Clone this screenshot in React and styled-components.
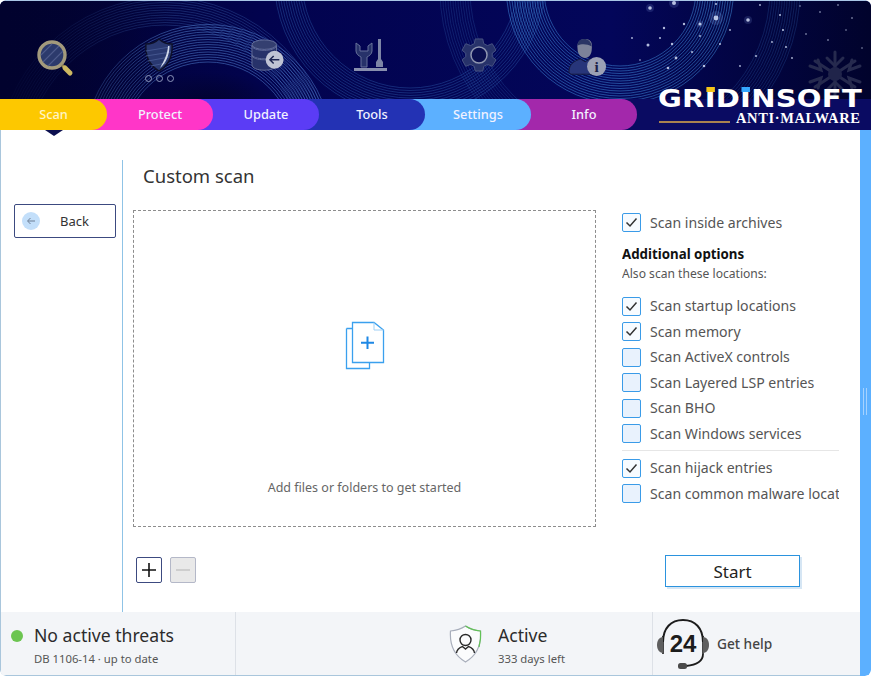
import React from 'react';
import styled, { createGlobalStyle } from 'styled-components';

const GlobalStyle = createGlobalStyle`
  html, body { margin: 0; padding: 0; background: #fff; }
  body { font-family: "Noto Sans", "Open Sans", sans-serif; }
  * { box-sizing: border-box; }
`;

const Window = styled.div`
  position: relative;
  width: 871px;
  height: 676px;
  display: flex;
  flex-direction: column;
  overflow: hidden;
  border-radius: 6px;
  background: #fff;
`;

const Banner = styled.div`
  position: relative;
  height: 99px;
  display: flex;
  overflow: hidden;
  background: #02034a;
  border-radius: 6px 6px 0 0;
  border-top: 1px solid #a9c6e6;
`;

const BannerArt = styled.svg`
  position: absolute;
  left: 0;
  top: -1px;
`;

const NavCell = styled.div`
  position: relative;
  width: 106px;
  display: flex;
  flex-direction: column;
  align-items: center;
  padding-top: 37px;
  padding-left: ${(p) => (p.$shift || 0) * 2}px;
`;

const Dots = styled.div`
  display: flex;
  gap: 4px;
  margin-top: 3px;
`;

const Dot = styled.span`
  width: 7px;
  height: 7px;
  border-radius: 50%;
  border: 1px solid #8d96ba;
`;

const TabStrip = styled.div`
  position: relative;
  height: 31px;
  display: flex;
  background: #0a0b62;
`;

const Tab = styled.div`
  position: relative;
  z-index: ${(p) => p.$layer};
  width: ${(p) => (p.$first ? 107 : 126)}px;
  margin-left: ${(p) => (p.$first ? 0 : -20)}px;
  padding-left: ${(p) => (p.$first ? 0 : 20)}px;
  background: ${(p) => p.$color};
  border-radius: 0 16px 16px 0;
  color: ${(p) => (p.$first ? '#fff4c4' : '#f2f2ff')};
  font-size: 12.8px;
  font-weight: 500;
  line-height: 30px;
  text-align: center;
`;

const Pointer = styled.div`
  position: absolute;
  left: 45px;
  top: 130px;
  z-index: 8;
  width: 0;
  height: 0;
  border-left: 9px solid transparent;
  border-right: 9px solid transparent;
  border-top: 6px solid #0c1050;
`;

const Logo = styled.div`
  position: absolute;
  left: 658px;
  top: 88px;
  z-index: 9;
  width: 206px;
  color: #fff;
`;

const LogoName = styled.div`
  height: 22px;
  font-family: "DejaVu Sans", sans-serif;
  font-weight: 700;
  font-size: 24px;
  line-height: 22px;
  letter-spacing: 0.2px;
  white-space: nowrap;
  transform: scaleX(1.21);
  transform-origin: left center;
`;

const LogoTip = styled.span`
  position: relative;
  &::before {
    content: '';
    position: absolute;
    left: 1px;
    right: 1px;
    top: 2px;
    height: 5px;
    background: ${(p) => p.$color};
  }
`;

const LogoLine = styled.div`
  display: flex;
  align-items: flex-end;
  gap: 6px;
`;

const LogoRule = styled.div`
  width: 71px;
  height: 2px;
  margin-bottom: 3px;
  margin-left: 1px;
  background: #a9824f;
`;

const LogoSub = styled.div`
  font-family: "Liberation Serif", serif;
  font-weight: 700;
  font-size: 14.5px;
  line-height: 16px;
  letter-spacing: 0.62px;
  white-space: nowrap;
`;

const Middle = styled.div`
  flex: 1;
  display: flex;
  min-height: 0;
`;

const LeftColumn = styled.div`
  width: 860px;
  display: flex;
  flex-direction: column;
  border-left: 1px solid #a9c6dc;
  border-bottom: 1px solid #a9c6dc;
  border-radius: 0 0 0 6px;
`;

const ScrollRail = styled.div`
  position: relative;
  width: 11px;
  background: #5cb0ff;
  border-radius: 0 0 6px 0;
`;

const ScrollGrip = styled.div`
  position: absolute;
  left: 3px;
  top: 258px;
  width: 4px;
  height: 27px;
  border-left: 1px solid #a5d2ff;
  border-right: 1px solid #a5d2ff;
`;

const Workspace = styled.div`
  flex: 1;
  display: flex;
  min-height: 0;
`;

const Sidebar = styled.div`
  width: 122px;
  margin-top: 30px;
  padding: 44px 0 0 13px;
  border-right: 1px solid #8fc3e6;
`;

const BackButton = styled.div`
  width: 102px;
  height: 34px;
  display: flex;
  align-items: center;
  padding-left: 7px;
  background: #fff;
  border: 1px solid #3c4a80;
  border-radius: 2px;
  color: #333;
  font-size: 13px;
`;

const BackCircle = styled.span`
  width: 18px;
  height: 18px;
  display: flex;
  align-items: center;
  justify-content: center;
  border-radius: 50%;
  background: #c3dffa;
  margin-right: 20px;
`;

const Content = styled.div`
  flex: 1;
  padding: 30px 0 0 10px;
`;

const Title = styled.h1`
  margin: 0 0 16px;
  padding-left: 10px;
  height: 34px;
  color: #333;
  font-size: 18.5px;
  font-weight: 400;
  line-height: 32px;
`;

const ScanRow = styled.div`
  display: flex;
  gap: 26px;
`;

const DropZone = styled.div`
  width: 463px;
  height: 317px;
  display: flex;
  flex-direction: column;
  align-items: center;
  padding: 110px 0 29px;
  border: 1px dashed #8d8d8d;
  color: #666;
  font-size: 12.5px;
`;

const DropHint = styled.div`
  margin-top: auto;
  line-height: 18px;
`;

const Options = styled.div`
  width: 217px;
  overflow: hidden;
`;

const OptionRow = styled.div`
  height: 25.5px;
  display: flex;
  align-items: center;
  gap: 9px;
  color: #555;
  font-size: 14.1px;
  white-space: nowrap;
`;

const OptionLabel = styled.span`
  margin-top: -1px;
`;

const Box = styled.span`
  flex: none;
  width: 19px;
  height: 19px;
  display: flex;
  align-items: center;
  justify-content: center;
  border: 1px solid #3a9be8;
  border-radius: 2px;
  background: ${(p) => (p.$checked ? '#f7fbff' : '#e9f2fd')};
`;

const OptionsHeading = styled.div`
  margin-top: 8px;
  color: #111;
  font-size: 13.3px;
  font-weight: 700;
  line-height: 20px;
`;

const OptionsNote = styled.div`
  margin-bottom: 11px;
  color: #555;
  font-size: 12.1px;
  line-height: 19px;
`;

const Divider = styled.div`
  height: 1px;
  margin: 3px 0 5px;
  background: #e6e6e6;
`;

const ActionRow = styled.div`
  display: flex;
  align-items: center;
  gap: 8px;
  margin-top: 26px;
  padding-left: 3px;
`;

const SquareButton = styled.div`
  width: 26px;
  height: 26px;
  display: flex;
  align-items: center;
  justify-content: center;
  border: 1px solid ${(p) => (p.$disabled ? '#b4b8c8' : '#3c4a80')};
  border-radius: 2px;
  background: ${(p) => (p.$disabled ? '#e9e9e9' : '#fff')};
`;

const StartButton = styled.div`
  width: 135px;
  height: 32px;
  margin-left: 461px;
  margin-top: 2px;
  border: 1px solid #2b93de;
  box-shadow: 2px 2px 0 #d6e6f4;
  color: #222;
  font-size: 17px;
  line-height: 31px;
  text-align: center;
`;

const Footer = styled.div`
  height: 63px;
  display: flex;
  background: #f3f5f8;
`;

const FooterCell = styled.div`
  width: ${(p) => p.$width}px;
  display: flex;
  align-items: center;
  padding-left: ${(p) => p.$pad}px;
  border-right: ${(p) => (p.$last ? 'none' : '1px solid #dde1e7')};
`;

const StatusDot = styled.span`
  flex: none;
  width: 12px;
  height: 12px;
  margin-right: 11px;
  margin-top: -16px;
  border-radius: 50%;
  background: #6cc551;
`;

const FooterText = styled.div`
  display: flex;
  flex-direction: column;
  margin-left: ${(p) => p.$gap || 0}px;
  padding-top: 3px;
`;

const FooterTitle = styled.div`
  color: #2b2b2b;
  font-size: 17.6px;
  line-height: 25px;
  white-space: nowrap;
`;

const FooterSub = styled.div`
  margin-top: 3px;
  color: #555;
  font-size: 11.3px;
  line-height: 16px;
  white-space: nowrap;
`;

const HelpLabel = styled.div`
  color: #444;
  font-size: 13.7px;
  font-weight: 500;
`;

const HeadsetWrap = styled.div`
  position: relative;
  width: 54px;
  height: 56px;
  margin-right: 7px;
`;

const HeadsetNumber = styled.div`
  position: absolute;
  left: 0;
  right: 0;
  top: 14px;
  color: #1c1c1c;
  font-family: "Liberation Sans", sans-serif;
  font-size: 24px;
  font-weight: 700;
  line-height: 28px;
  text-align: center;
`;

const STARS = [
  [650, 8, 1.8], [674, 3, 2], [716, 18, 2.4], [700, 24, 1.5], [684, 24, 1.2], [664, 28, 1.2], [648, 45, 1.5],
  [660, 38, 1], [672, 44, 1.2], [676, 58, 1.4], [692, 52, 1], [668, 68, 1.3], [704, 66, 1.3], [720, 44, 1],
  [748, 20, 1.8], [760, 5, 0.9], [780, 15, 1], [783, 30, 1.1], [786, 47, 1], [792, 58, 0.9], [756, 56, 1], [740, 66, 0.9],
  [820, 12, 0.8], [838, 5, 0.8], [852, 18, 0.8], [806, 34, 0.8], [828, 40, 0.8], [862, 48, 0.7], [716, 4, 1], [632, 38, 0.9],
  [640, 60, 0.8], [700, 36, 0.9], [730, 30, 0.9], [772, 42, 0.9], [800, 6, 0.7], [846, 30, 0.7],
];

const GLOWS = [[674, 3, 5], [716, 18, 7], [650, 8, 4], [748, 20, 4], [700, 24, 3.5]];

function rings(cx, cy, from, to, step, color, opacity) {
  const out = [];
  for (let r = from; r <= to; r += step) {
    out.push(<circle key={`${cx}-${r}`} cx={cx} cy={cy} r={r} fill="none" stroke={color} strokeWidth="0.7" opacity={opacity} />);
  }
  return out;
}

function BannerDrawing() {
  return (
    <BannerArt width="871" height="99" viewBox="0 0 871 99">
      <defs>
        <linearGradient id="base" x1="0" x2="1" y1="0" y2="0">
          <stop offset="0" stopColor="#01022e" />
          <stop offset="0.3" stopColor="#02034e" />
          <stop offset="0.7" stopColor="#03065a" />
          <stop offset="1" stopColor="#01032c" />
        </linearGradient>
        <linearGradient id="ringFade" x1="0" x2="1" y1="0" y2="0">
          <stop offset="0" stopColor="#01022e" stopOpacity="0.95" />
          <stop offset="0.08" stopColor="#01022e" stopOpacity="0.6" />
          <stop offset="0.2" stopColor="#01022e" stopOpacity="0" />
        </linearGradient>
        <radialGradient id="pocket" cx="0.5" cy="0.5" r="0.5">
          <stop offset="0" stopColor="#01022e" stopOpacity="0.9" />
          <stop offset="1" stopColor="#01022e" stopOpacity="0" />
        </radialGradient>
      </defs>
      <rect width="871" height="99" fill="url(#base)" />
      {rings(165, 165, 140, 168, 2.5, '#3f66b4', 0.5)}
      {rings(208, 148, 86, 125, 2.5, '#5585d4', 0.75)}
      {rings(410, -20, 108, 136, 2.5, '#3568b8', 0.55)}
      {rings(620, -10, 76, 114, 2.5, '#4595e4', 0.7)}
      {rings(620, -10, 150, 180, 2.5, '#2f60ae', 0.42)}
      <ellipse cx="208" cy="100" rx="70" ry="28" fill="url(#pocket)" />
      <rect width="871" height="99" fill="url(#ringFade)" />
      {GLOWS.map(([x, y, r]) => (
        <circle key={`g${x}`} cx={x} cy={y} r={r} fill="#9fbcff" opacity="0.15" />
      ))}
      {STARS.map(([x, y, r]) => (
        <circle key={`${x}-${y}`} cx={x} cy={y} r={r} fill="#dfe9ff" opacity="0.8" />
      ))}
      <g stroke="#262a4e" strokeWidth="3" strokeLinecap="round" fill="none">
        <path d="M835 52V96M815 61L855 87M855 61L815 87" />
        <path d="M827 58L835 66L843 58M827 90L835 82L843 90M810 66L821 70L818 60M860 66L849 70L852 60M810 82L821 78L818 88M860 82L849 78L852 88" />
      </g>
      <circle cx="835" cy="74" r="7" fill="#20244a" />
    </BannerArt>
  );
}

function ScanIcon() {
  return (
    <svg width="44" height="42" viewBox="0 0 44 42">
      <circle cx="19" cy="17" r="13" fill="#2c3a6c" stroke="#a39a7c" strokeWidth="3.4" />
      <path d="M10 24L26 8M15 28L30 13M8 17L19 6" stroke="#4d5a8a" strokeWidth="1.1" />
      <path d="M29 27L33 31" stroke="#8f8250" strokeWidth="3" />
      <path d="M32 30L37 35" stroke="#cdb862" strokeWidth="5" strokeLinecap="round" />
    </svg>
  );
}

function ShieldIcon() {
  return (
    <svg width="30" height="34" viewBox="0 0 30 34">
      <path d="M15 1C18 4 23 6 28 6C29 18 25 27 15 33C5 27 1 18 2 6C7 6 12 4 15 1Z" fill="#293870" stroke="#0d1028" strokeWidth="1.4" />
      <path d="M2 13L26 9M2 18L27 14M4 23L25 19M7 28L22 25" stroke="#44568f" strokeWidth="1" />
      <path d="M25.500 8C25.500 17 22 25 16 30C20 23 23.500 16 24 8Z" fill="#cfd7e8" />
    </svg>
  );
}

function UpdateIcon() {
  return (
    <svg width="34" height="36" viewBox="0 0 36 38">
      <ellipse cx="14" cy="7" rx="13" ry="5" fill="#343f70" stroke="#67719a" />
      <path d="M1 8V17C1 20 7 22 14 22C21 22 27 20 27 17V8C27 11 21 13 14 13C7 13 1 11 1 8Z" fill="#27326a" stroke="#67719a" />
      <path d="M1 18V28C1 32 7 34 14 34C21 34 27 32 27 28V18C27 21 21 23 14 23C7 23 1 21 1 18Z" fill="#27326a" stroke="#67719a" />
      <circle cx="25" cy="23" r="9.500" fill="#bfc3d4" />
      <path d="M30 23H20M24 19L20 23L24 27" fill="none" stroke="#1d2552" strokeWidth="1.6" />
    </svg>
  );
}

function ToolsIcon() {
  return (
    <svg width="36" height="36" viewBox="0 0 36 36">
      <path d="M3 5V13C3 16 6 18 8 19V29H14V19C16 18 19 16 19 13V5L15 8V13H7V8Z" fill="#27326a" stroke="#67719a" />
      <path d="M25 1H28V21L30 24V29H23V24L25 21Z" fill="#7d85a6" />
      <path d="M1 30H34V33H1Z" fill="#888fae" />
    </svg>
  );
}

function GearIcon() {
  return (
    <svg width="34" height="34" viewBox="0 0 36 36">
      <path d="M14 1H22L23 6L27 8L32 6L36 13L32 16V20L36 23L32 30L27 28L23 30L22 35H14L13 30L9 28L4 30L0 23L4 20V16L0 13L4 6L9 8L13 6Z" fill="#27326a" stroke="#4a5584" />
      <circle cx="18" cy="18" r="8.500" fill="#0a0f50" stroke="#8f96b0" strokeWidth="1.6" />
    </svg>
  );
}

function InfoIcon() {
  return (
    <svg width="40" height="40" viewBox="0 0 42 42">
      <path d="M10 11C9 4 13 1 18 1C23 1 26 4 25 11C25 17 22 21 18 21C14 21 10 17 10 11Z" fill="#7c8299" />
      <path d="M10 8C14 6 20 6 25 9C24 3 21 1 17 1C12 1 10 4 10 8Z" fill="#2a3565" />
      <path d="M1 36C1 27 7 24 13 22L18 25L23 22C28 24 33 26 34 30V38H3Z" fill="#27357a" stroke="#161a3e" />
      <circle cx="30" cy="30" r="10" fill="#9ca1b5" />
      <text x="30" y="36" textAnchor="middle" fontFamily="Liberation Serif" fontSize="16" fontWeight="700" fill="#1b2048">i</text>
    </svg>
  );
}

function CheckMark() {
  return (
    <svg width="13" height="11" viewBox="0 0 13 11">
      <path d="M1.500 5.500L5 9L11.500 1.500" fill="none" stroke="#333" strokeWidth="1.5" />
    </svg>
  );
}

function Option({ checked, children }) {
  return (
    <OptionRow>
      <Box $checked={checked}>{checked && <CheckMark />}</Box>
      <OptionLabel>{children}</OptionLabel>
    </OptionRow>
  );
}

function AddFilesIcon() {
  return (
    <svg width="40" height="50" viewBox="0 0 40 50">
      <path d="M1.500 7.500H7.500M1.500 7.500V47.500H24.500V41.500" fill="none" stroke="#3aa0ee" strokeWidth="1.3" />
      <path d="M7.500 1.500H29L38.500 9V41.500H7.500Z" fill="#fff" stroke="#3aa0ee" strokeWidth="1.3" />
      <path d="M29 1.500V9H38.500" fill="none" stroke="#9fd0f5" strokeWidth="1" />
      <path d="M22.500 15.500V28M16 21.700H29" stroke="#1e88e5" strokeWidth="2" />
    </svg>
  );
}

function ActiveShield() {
  return (
    <svg width="33" height="38" viewBox="0 0 33 38">
      <path d="M16.500 1C21 4 26 5.500 31.500 6C32.500 20 27 31 16.500 37C6 31 0.500 20 1.500 6C7 5.500 12 4 16.500 1Z" fill="#fbfcfd" stroke="#a8aebb" strokeWidth="1.2" />
      <path d="M16.500 1C21 4 26 5.500 31.500 6C32 12 31.500 17 30 22" fill="none" stroke="#63c257" strokeWidth="1.2" />
      <circle cx="16.500" cy="15" r="5.500" fill="none" stroke="#2a2a2a" strokeWidth="1.4" />
      <path d="M7.500 28C8 23.500 11 22.500 13.500 21.500L16.500 24L19.500 21.500C22 22.500 25 23.500 25.500 28" fill="none" stroke="#2a2a2a" strokeWidth="1.4" />
    </svg>
  );
}

function HeadsetIcon() {
  return (
    <svg width="54" height="56" viewBox="0 0 54 56">
      <path d="M7 26C7 12 15 4 27 4C39 4 47 12 47 26" fill="none" stroke="#1c1c1c" strokeWidth="2" />
      <path d="M7 20V38" stroke="#1c1c1c" strokeWidth="1.6" />
      <path d="M47 20V38" stroke="#1c1c1c" strokeWidth="1.6" />
      <path d="M7 21C3 21 1 25 1 29C1 33 3 37 7 37Z" fill="#5f5f5f" />
      <path d="M47 21C51 21 53 25 53 29C53 33 51 37 47 37Z" fill="#5f5f5f" />
      <path d="M47 38C47 45 40 49 30 50" fill="none" stroke="#1c1c1c" strokeWidth="1.8" />
      <rect x="22" y="47" width="9" height="6" rx="2.500" fill="#4a4a4a" />
    </svg>
  );
}

const TABS = [
  { label: 'Scan', color: '#fdc800' },
  { label: 'Protect', color: '#ff36c8' },
  { label: 'Update', color: '#5b3cf5' },
  { label: 'Tools', color: '#2332b4' },
  { label: 'Settings', color: '#5cb0ff' },
  { label: 'Info', color: '#a328ab' },
];

export default function App() {
  return (
    <>
      <GlobalStyle />
      <Window>
        <Banner>
          <BannerDrawing />
          <NavCell $shift={2}><ScanIcon /></NavCell>
          <NavCell>
            <ShieldIcon />
            <Dots><Dot /><Dot /><Dot /></Dots>
          </NavCell>
          <NavCell $shift={3}><UpdateIcon /></NavCell>
          <NavCell><ToolsIcon /></NavCell>
          <NavCell $shift={2}><GearIcon /></NavCell>
          <NavCell $shift={5}><InfoIcon /></NavCell>
        </Banner>
        <TabStrip>
          {TABS.map((tab, i) => (
            <Tab key={tab.label} $first={i === 0} $color={tab.color} $layer={TABS.length - i}>
              {tab.label}
            </Tab>
          ))}
        </TabStrip>
        <Pointer />
        <Logo>
          <LogoName>GR<LogoTip $color="#f5c518">I</LogoTip>D<LogoTip $color="#35a7ff">I</LogoTip>NSOFT</LogoName>
          <LogoLine>
            <LogoRule />
            <LogoSub>ANTI·MALWARE</LogoSub>
          </LogoLine>
        </Logo>
        <Middle>
          <LeftColumn>
            <Workspace>
              <Sidebar>
                <BackButton>
                  <BackCircle>
                    <svg width="10" height="8" viewBox="0 0 10 8">
                      <path d="M9 4H2M4.500 1L1.500 4L4.500 7" fill="none" stroke="#6d7f95" strokeWidth="1" />
                    </svg>
                  </BackCircle>
                  Back
                </BackButton>
              </Sidebar>
              <Content>
                <Title>Custom scan</Title>
                <ScanRow>
                  <DropZone>
                    <AddFilesIcon />
                    <DropHint>Add files or folders to get started</DropHint>
                  </DropZone>
                  <Options>
                    <Option checked>Scan inside archives</Option>
                    <OptionsHeading>Additional options</OptionsHeading>
                    <OptionsNote>Also scan these locations:</OptionsNote>
                    <Option checked>Scan startup locations</Option>
                    <Option checked>Scan memory</Option>
                    <Option>Scan ActiveX controls</Option>
                    <Option>Scan Layered LSP entries</Option>
                    <Option>Scan BHO</Option>
                    <Option>Scan Windows services</Option>
                    <Divider />
                    <Option checked>Scan hijack entries</Option>
                    <Option>Scan common malware locations</Option>
                  </Options>
                </ScanRow>
                <ActionRow>
                  <SquareButton>
                    <svg width="16" height="16" viewBox="0 0 16 16">
                      <path d="M8 1V15M1 8H15" stroke="#111" strokeWidth="1.6" />
                    </svg>
                  </SquareButton>
                  <SquareButton $disabled>
                    <svg width="14" height="2" viewBox="0 0 14 2">
                      <path d="M0 1H14" stroke="#c4c4c4" strokeWidth="1.6" />
                    </svg>
                  </SquareButton>
                  <StartButton>Start</StartButton>
                </ActionRow>
              </Content>
            </Workspace>
            <Footer>
              <FooterCell $width={235} $pad={10}>
                <StatusDot />
                <FooterText>
                  <FooterTitle>No active threats</FooterTitle>
                  <FooterSub>DB 1106-14 · up to date</FooterSub>
                </FooterText>
              </FooterCell>
              <FooterCell $width={417} $pad={213}>
                <ActiveShield />
                <FooterText $gap={16}>
                  <FooterTitle>Active</FooterTitle>
                  <FooterSub>333 days left</FooterSub>
                </FooterText>
              </FooterCell>
              <FooterCell $width={207} $pad={3} $last>
                <HeadsetWrap>
                  <HeadsetIcon />
                  <HeadsetNumber>24</HeadsetNumber>
                </HeadsetWrap>
                <HelpLabel>Get help</HelpLabel>
              </FooterCell>
            </Footer>
          </LeftColumn>
          <ScrollRail><ScrollGrip /></ScrollRail>
        </Middle>
      </Window>
    </>
  );
}
